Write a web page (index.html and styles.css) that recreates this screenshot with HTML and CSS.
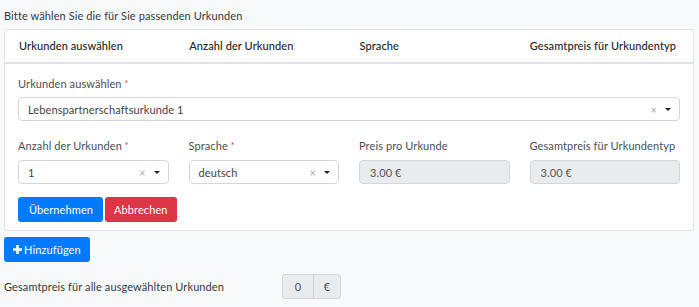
FILE: index.html
```html
<!DOCTYPE html>
<html>
	<head>
		<meta charset="utf-8">
		<title>Urkunden</title>
		<link rel="stylesheet" href="styles.css">
	</head>
	<body>
		<div class="page">
			<p class="intro">Bitte wählen Sie die für Sie passenden Urkunden</p>
			<div class="card">
				<div class="card-head grid">
					<div>Urkunden auswählen</div>
					<div>Anzahl der Urkunden</div>
					<div>Sprache</div>
					<div>Gesamtpreis für Urkundentyp</div>
				</div>
				<div class="card-body">
					<label class="label">Urkunden auswählen <span class="req">*</span></label>
					<div class="select">
						<span class="value">Lebenspartnerschaftsurkunde 1</span>
						<span class="clear">×</span><span class="arrow"></span>
					</div>
					<div class="grid row2">
						<div>
							<label class="label">Anzahl der Urkunden <span class="req">*</span></label>
							<div class="select">
								<span class="value">1</span>
								<span class="clear">×</span><span class="arrow"></span>
							</div>
						</div>
						<div>
							<label class="label">Sprache <span class="req">*</span></label>
							<div class="select">
								<span class="value">deutsch</span>
								<span class="clear">×</span><span class="arrow"></span>
							</div>
						</div>
						<div>
							<label class="label">Preis pro Urkunde</label>
							<div class="input disabled">3.00 €</div>
						</div>
						<div>
							<label class="label">Gesamtpreis für Urkundentyp</label>
							<div class="input disabled">3.00 €</div>
						</div>
					</div>
					<div class="buttons">
						<a href="javascript:;" class="btn btn-blue">Übernehmen</a>
						<a href="javascript:;" class="btn btn-red">Abbrechen</a>
					</div>
				</div>
			</div>
			<a href="javascript:;" class="btn btn-blue btn-add">
				<svg width="9" height="9" viewBox="0 0 9 9"><path d="M3.2 0h2.6v3.2H9v2.6H5.8V9H3.2V5.8H0V3.2h3.2z" fill="#fff"/></svg>Hinzufügen
			</a>
			<div class="total">
				<span class="total-label">Gesamtpreis für alle ausgewählten Urkunden</span>
				<div class="input-group">
					<span class="ig-value">0</span>
					<span class="ig-addon">€</span>
				</div>
			</div>
		</div>
	</body>
</html>
```
FILE: styles.css
```css
body {
	margin: 0;
	background-color: #f8f9fa;
	font-family: "Lato", "Noto Sans", sans-serif;
	font-size: 11px;
	letter-spacing: 0.1px;
	color: #212529;
}
.page {
	padding: 0 5px 0 4px;
}
.intro {
	margin: 7px 0 4px;
	line-height: 18px;
	color: #343a40;
}
.card {
	background-color: #fff;
	border: 1px solid #dfe2e6;
	border-radius: 3px;
}
.grid {
	display: grid;
	grid-template-columns: repeat(4, 1fr);
	column-gap: 20px;
}
.card-head {
	height: 32px;
	line-height: 32px;
	padding: 0 13px 0 14px;
	border-bottom: 2px solid #dee2e6;
	font-weight: 500;
	font-size: 11px;
}
.card-body {
	padding: 12px 13px 8px 13px;
}
.label {
	display: block;
	line-height: 16px;
	margin-bottom: 5px;
	color: #495057;
}
.req {
	color: #dc3545;
	font-size: 9px;
	vertical-align: top;
}
.select, .input {
	height: 24px;
	box-sizing: border-box;
	border: 1px solid #d3d6da;
	border-radius: 4px;
	background-color: #fff;
	display: flex;
	align-items: center;
	padding: 0 7px 0 9px;
	color: #444;
}
.select .value {
	flex: 1;
}
.clear {
	color: #aaa;
	font-size: 11px;
	margin-right: 8px;
}
.arrow {
	width: 0;
	height: 0;
	border-left: 3px solid transparent;
	border-right: 3px solid transparent;
	border-top: 3px solid #222;
	margin-right: 1px;
}
.row2 {
	margin-top: 17px;
}
.row2 .label {
	margin-bottom: 6px;
}
.input.disabled {
	background-color: #e9ecef;
	color: #555;
	padding-left: 10px;
}
.buttons {
	margin-top: 13px;
	display: flex;
	gap: 2px;
}
.btn {
	display: inline-flex;
	align-items: center;
	height: 25px;
	padding: 0 10px 0 11px;
	border-radius: 3px;
	color: #fff;
	text-decoration: none;
	font-size: 11px;
	box-sizing: border-box;
}
.btn-blue {
	background-color: #007bff;
}
.btn-red {
	background-color: #dc3545;
	padding: 0 9px;
}
.btn-add {
	margin-top: 6px;
	padding: 0 9px 0 9px;
	gap: 2px;
}
.total {
	margin-top: 12px;
	display: flex;
	align-items: center;
}
.total-label {
	width: 278px;
	color: #343a40;
}
.input-group {
	display: flex;
	height: 25px;
	box-sizing: border-box;
	border: 1px solid #d3d6da;
	border-radius: 3px;
	background-color: #e9ecef;
	color: #495057;
}
.ig-value {
	width: 30px;
	display: flex;
	align-items: center;
	justify-content: center;
	border-right: 1px solid #ced4da;
}
.ig-addon {
	width: 26px;
	display: flex;
	align-items: center;
	justify-content: center;
}
```
